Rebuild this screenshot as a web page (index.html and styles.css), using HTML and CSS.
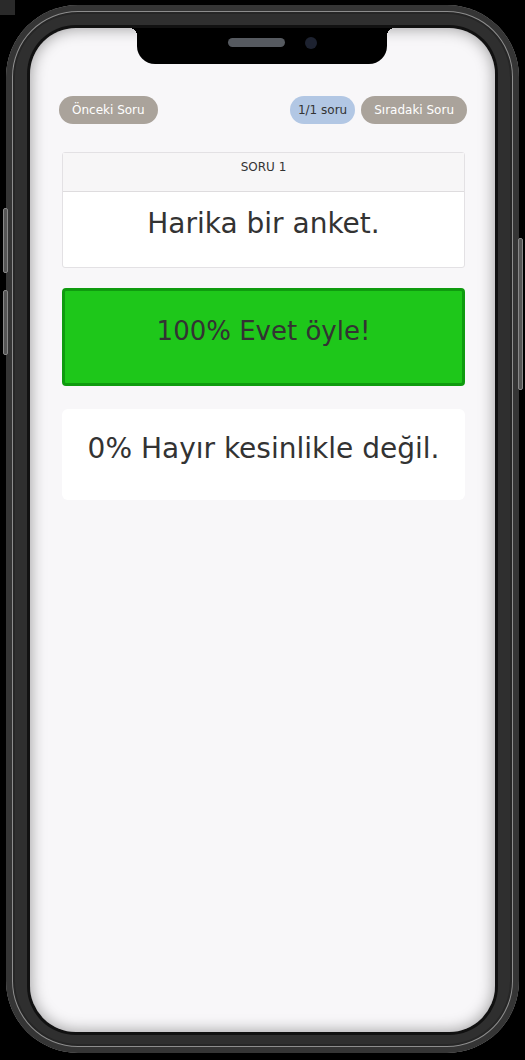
FILE: index.html
```html
<!DOCTYPE html>
<html lang="tr">
<head>
    <meta charset="UTF-8">
    <meta name="viewport" content="width=device-width, initial-scale=1.0">
    <title>Anket Sonuçları</title>
    <link rel="stylesheet" href="styles.css">
</head>
<body>

<div class="corner"></div>

<div class="phone">
    <span class="side-btn side-1"></span>
    <span class="side-btn side-2"></span>
    <span class="side-btn side-3"></span>

    <div class="screen">
        <div class="notch">
            <span class="speaker"></span>
            <span class="camera"></span>
        </div>

        <div class="nav">
            <button class="pill pill-grey">Önceki Soru</button>
            <div class="nav-right">
                <span class="pill pill-blue">1/1 soru</span>
                <button class="pill pill-grey">Sıradaki Soru</button>
            </div>
        </div>

        <div class="question">
            <div class="question-head">SORU 1</div>
            <div class="question-body">Harika bir anket.</div>
        </div>

        <div class="answer answer-win">100% Evet öyle!</div>
        <div class="answer">0% Hayır kesinlikle değil.</div>
    </div>
</div>

</body>
</html>
```

FILE: styles.css
```css
body { margin: 0; background-color: #000; font-family: "DejaVu Sans", sans-serif; color: #333; }
.corner { position: absolute; left: 0; top: 0; width: 15px; height: 15px; background-color: #2a2a2a; }

.phone { position: relative; margin: 5px 0 0 6px; width: 513px; height: 1048px; box-sizing: border-box; padding: 23px 24px 21px 24px; border-radius: 72px; background-color: #2f2f2f; box-shadow: inset 0 0 0 6px #353535, inset 0 0 0 7px #8d8d8d, inset 0 0 0 9px #262626; }
.side-btn { position: absolute; width: 3px; background-color: #555; border: 1px solid #888; border-radius: 2px; }
.side-1 { left: -3px; top: 203px; height: 63px; }
.side-2 { left: -3px; top: 285px; height: 63px; }
.side-3 { right: -4px; top: 233px; height: 150px; }

.screen { position: relative; height: 100%; box-sizing: border-box; padding: 68px 28px 0 29px; border-radius: 46px; background-color: #f8f7f9; box-shadow: 0 0 0 3px #111, inset 0 0 16px rgba(0, 0, 0, 0.4); overflow: hidden; }

.notch { position: absolute; left: 107px; top: 0; width: 250px; height: 36px; background-color: #000; border-radius: 0 0 18px 18px; display: flex; align-items: center; justify-content: center; gap: 20px; padding-left: 20px; box-sizing: border-box; }
.notch::before, .notch::after { content: ""; position: absolute; top: 0; width: 8px; height: 8px; }
.notch::before { left: -8px; background: radial-gradient(circle at 0 100%, transparent 8px, #000 8px); }
.notch::after { right: -8px; background: radial-gradient(circle at 100% 100%, transparent 8px, #000 8px); }
.speaker { width: 57px; height: 9px; border-radius: 5px; background-color: #565a60; margin-top: -8px; }
.camera { width: 12px; height: 12px; border-radius: 50%; background-color: #1d2230; margin-top: -6px; }

.nav { display: flex; justify-content: space-between; align-items: center; }
.nav-right { display: flex; gap: 6px; }
.pill { font-family: inherit; font-size: 12px; height: 28px; padding: 0 13px; border: none; border-radius: 14px; display: inline-flex; align-items: center; }
.pill-grey { background-color: #aaa39b; color: #fff; }
.pill-blue { background-color: #b2c7e4; color: #333; padding: 0 8px; }

.question { margin: 28px 2px 0 3px; background-color: #fff; border: 1px solid #e3e1e4; border-radius: 3px; }
.question-head { height: 38px; line-height: 28px; text-align: center; font-size: 12px; background-color: #f7f6f7; border-bottom: 1px solid #dedcde; }
.question-body { height: 75px; line-height: 64px; text-align: center; font-size: 28px; }

.answer { margin: 20px 2px 0 3px; height: 91px; line-height: 80px; text-align: center; font-size: 28px; background-color: #fff; border-radius: 6px; }
.answer-win { height: 98px; line-height: 80px; box-sizing: border-box; font-size: 26px; background-color: #1ec71a; border: 3px solid #0f9b0f; border-radius: 4px; margin-bottom: 23px; }
.answer-win + .answer { margin-top: 0; }
```
